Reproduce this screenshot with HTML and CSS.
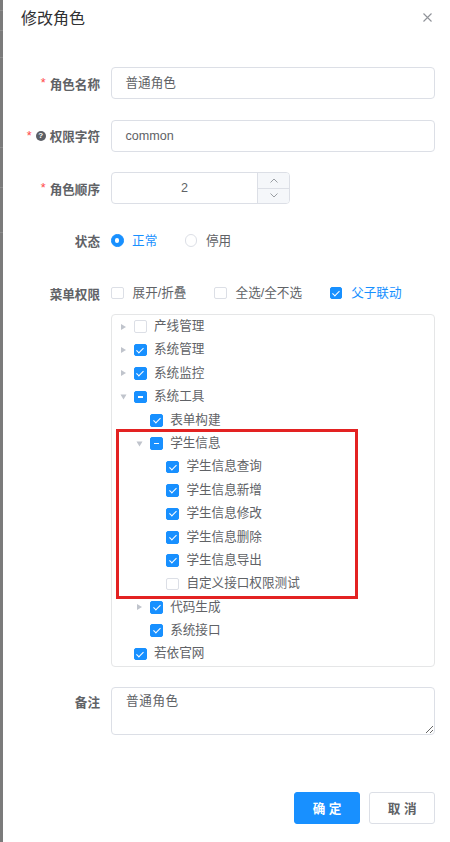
FILE: index.html
```html
<!DOCTYPE html>
<html lang="zh-CN">
<head>
<meta charset="utf-8">
<title>修改角色</title>
<link rel="stylesheet" href="styles.css">
</head>
<body>
<div class="page">
  <div class="backdrop"></div>
  <div class="dialog">
    <div class="dialog-header">
      <span class="dialog-title">修改角色</span>
      <span class="close">
        <svg width="9" height="9" viewBox="0 0 9 9"><path d="M0.5 0.5 L8.5 8.5 M8.5 0.5 L0.5 8.5" stroke="#909399" stroke-width="1.1" fill="none"/></svg>
      </span>
    </div>
    <div class="dialog-body">
      <div class="form-item">
        <div class="form-label"><span class="req">*</span>角色名称</div>
        <div class="form-content"><div class="input">普通角色</div></div>
      </div>
      <div class="form-item">
        <div class="form-label"><span class="req">*</span><span class="help">?</span>权限字符</div>
        <div class="form-content"><div class="input">common</div></div>
      </div>
      <div class="form-item">
        <div class="form-label"><span class="req">*</span>角色顺序</div>
        <div class="form-content">
          <div class="input-number">
            <div class="num-value">2</div>
            <div class="num-controls">
              <div class="num-btn num-up"><svg width="8" height="5" viewBox="0 0 8 5"><path d="M0.5 4.5 L4 1 L7.5 4.5" stroke="#909399" stroke-width="0.9" fill="none"/></svg></div>
              <div class="num-btn"><svg width="8" height="5" viewBox="0 0 8 5"><path d="M0.5 0.5 L4 4 L7.5 0.5" stroke="#909399" stroke-width="0.9" fill="none"/></svg></div>
            </div>
          </div>
        </div>
      </div>
      <div class="form-item">
        <div class="form-label">状态</div>
        <div class="form-content">
          <div class="radio-group">
            <div class="radio is-checked"><span class="radio-dot"></span><span class="radio-label">正常</span></div>
            <div class="radio"><span class="radio-dot"></span><span class="radio-label">停用</span></div>
          </div>
        </div>
      </div>
      <div class="form-item">
        <div class="form-label">菜单权限</div>
        <div class="form-content">
          <div class="check-group">
            <div class="check-item"><span class="cb"></span><span class="check-label">展开/折叠</span></div>
            <div class="check-item"><span class="cb"></span><span class="check-label">全选/全不选</span></div>
            <div class="check-item is-checked"><span class="cb checked"></span><span class="check-label">父子联动</span></div>
          </div>
          <div class="tree">
            <div class="node"><span class="expand"><span class="caret"></span></span><span class="cb"></span><span class="node-label">产线管理</span></div>
            <div class="node"><span class="expand"><span class="caret"></span></span><span class="cb checked"></span><span class="node-label">系统管理</span></div>
            <div class="node"><span class="expand"><span class="caret"></span></span><span class="cb checked"></span><span class="node-label">系统监控</span></div>
            <div class="node"><span class="expand"><span class="caret down"></span></span><span class="cb indeterminate"></span><span class="node-label">系统工具</span></div>
            <div class="node lvl1"><span class="expand"></span><span class="cb checked"></span><span class="node-label">表单构建</span></div>
            <div class="node lvl1"><span class="expand"><span class="caret down"></span></span><span class="cb indeterminate"></span><span class="node-label">学生信息</span></div>
            <div class="node lvl2"><span class="expand"></span><span class="cb checked"></span><span class="node-label">学生信息查询</span></div>
            <div class="node lvl2"><span class="expand"></span><span class="cb checked"></span><span class="node-label">学生信息新增</span></div>
            <div class="node lvl2"><span class="expand"></span><span class="cb checked"></span><span class="node-label">学生信息修改</span></div>
            <div class="node lvl2"><span class="expand"></span><span class="cb checked"></span><span class="node-label">学生信息删除</span></div>
            <div class="node lvl2"><span class="expand"></span><span class="cb checked"></span><span class="node-label">学生信息导出</span></div>
            <div class="node lvl2"><span class="expand"></span><span class="cb"></span><span class="node-label">自定义接口权限测试</span></div>
            <div class="node lvl1"><span class="expand"><span class="caret"></span></span><span class="cb checked"></span><span class="node-label">代码生成</span></div>
            <div class="node lvl1"><span class="expand"></span><span class="cb checked"></span><span class="node-label">系统接口</span></div>
            <div class="node"><span class="expand"></span><span class="cb checked"></span><span class="node-label">若依官网</span></div>
            <div class="highlight"></div>
          </div>
        </div>
      </div>
      <div class="form-item">
        <div class="form-label label-top">备注</div>
        <div class="form-content"><textarea class="textarea" readonly>普通角色</textarea></div>
      </div>
    </div>
    <div class="dialog-footer">
      <button class="btn btn-primary">确 定</button>
      <button class="btn">取 消</button>
    </div>
  </div>
</div>
</body>
</html>
```
FILE: styles.css
```css
html, body {
  margin: 0;
  padding: 0;
  height: 100%;
}

body {
  font-family: "Liberation Sans", "Noto Sans CJK SC", sans-serif;
  font-size: 12.6px;
  color: #606266;
  background: #fff;
}

.page {
  display: flex;
  height: 842px;
  overflow: hidden;
}

.backdrop {
  width: 3px;
  flex: none;
  background: linear-gradient(to bottom,
    #7b7b7b 0 10px, #8c8c8c 10px 11px,
    #7b7b7b 11px 30px, #8c8c8c 30px 31px,
    #7b7b7b 31px 57px, #8c8c8c 57px 58px,
    #7b7b7b 58px 147px, #8c8c8c 147px 148px,
    #7b7b7b 148px 187px, #8c8c8c 187px 188px,
    #7b7b7b 188px 232px, #8c8c8c 232px 233px,
    #7b7b7b 233px 100%);
}

.dialog {
  flex: 1;
  min-width: 0;
  background: #fff;
  padding: 0 15px 0 18px;
  display: flex;
  flex-direction: column;
}

.dialog-header {
  display: flex;
  align-items: flex-start;
  height: 38px;
  padding-top: 8px;
  box-sizing: border-box;
}

.dialog-title {
  font-size: 16px;
  line-height: 22px;
  color: #303133;
}

.close {
  margin-left: auto;
  margin-right: 3px;
  margin-top: 4.5px;
  width: 9px;
  height: 9px;
  display: flex;
}

.dialog-body {
  padding-top: 29px;
}

.form-item {
  display: flex;
  margin-bottom: 20.5px;
}

.form-label {
  width: 90px;
  height: 32px;
  flex: none;
  box-sizing: border-box;
  padding-right: 11px;
  display: flex;
  justify-content: flex-end;
  align-items: center;
  font-weight: 700;
  color: #606266;
  white-space: nowrap;
}

.label-top {
  height: 28px;
}

.req {
  color: #ff4949;
  margin-right: 4px;
  font-weight: 400;
}

.help {
  display: inline-flex;
  justify-content: center;
  align-items: center;
  width: 10px;
  height: 10px;
  border-radius: 50%;
  background: #5c5f66;
  color: #fff;
  font-size: 8px;
  font-weight: 700;
  line-height: 10px;
  margin-right: 4px;
}

.form-content {
  flex: 1;
  min-width: 0;
  line-height: 32px;
}

.input {
  height: 32px;
  box-sizing: border-box;
  border: 1px solid #dcdfe6;
  border-radius: 4px;
  padding: 0 13.5px;
  line-height: 30px;
  color: #606266;
}

.input-number {
  display: flex;
  width: 179px;
  height: 32px;
  box-sizing: border-box;
  border: 1px solid #dcdfe6;
  border-radius: 4px;
  overflow: hidden;
}

.num-value {
  flex: 1;
  text-align: center;
  line-height: 30px;
  color: #606266;
}

.num-controls {
  width: 31px;
  flex: none;
  display: flex;
  flex-direction: column;
  background: #f5f7fa;
  border-left: 1px solid #dcdfe6;
}

.num-btn {
  flex: 1;
  display: flex;
  justify-content: center;
  align-items: center;
}

.num-up {
  border-bottom: 1px solid #dcdfe6;
}

.radio-group {
  display: flex;
  align-items: center;
  height: 32px;
}

.radio {
  display: flex;
  align-items: center;
  margin-right: 27.5px;
}

.radio-dot {
  width: 12.6px;
  height: 12.6px;
  box-sizing: border-box;
  border: 1px solid #dcdfe6;
  border-radius: 50%;
  background: #fff;
  display: flex;
  justify-content: center;
  align-items: center;
}

.radio.is-checked .radio-dot {
  background: #1890ff;
  border-color: #1890ff;
}

.radio.is-checked .radio-dot::after {
  content: "";
  width: 4.2px;
  height: 4.2px;
  border-radius: 50%;
  background: #fff;
}

.radio-label {
  padding-left: 8.5px;
  color: #606266;
}

.radio.is-checked .radio-label {
  color: #1890ff;
}

.check-group {
  display: flex;
  align-items: center;
  height: 32px;
}

.check-item {
  display: flex;
  align-items: center;
  margin-right: 27.5px;
}

.check-label {
  padding-left: 9px;
  color: #606266;
}

.check-item.is-checked .check-label {
  color: #1890ff;
}

.cb {
  width: 12.6px;
  height: 12.6px;
  box-sizing: border-box;
  border: 1px solid #dcdfe6;
  border-radius: 2px;
  background: #fff;
  position: relative;
  flex: none;
}

.cb.checked,
.cb.indeterminate {
  background: #1890ff;
  border-color: #1890ff;
}

.cb.checked::after {
  content: "";
  position: absolute;
  left: 3.4px;
  top: 0.8px;
  width: 2.7px;
  height: 6px;
  border: 1px solid #fff;
  border-left: 0;
  border-top: 0;
  transform: rotate(45deg);
}

.cb.indeterminate::after {
  content: "";
  position: absolute;
  left: 2.5px;
  right: 2.5px;
  top: 4.6px;
  height: 1.4px;
  background: #fff;
}

.tree {
  position: relative;
  margin-top: 5px;
  border: 1px solid #e5e6e7;
  border-radius: 4px;
  background: #fff;
}

.node {
  display: flex;
  align-items: center;
  height: 23.4px;
  line-height: 23.4px;
}

.lvl1 {
  padding-left: 16.2px;
}

.lvl2 {
  padding-left: 32.4px;
}

.expand {
  width: 22px;
  height: 100%;
  flex: none;
  display: flex;
  justify-content: center;
  align-items: center;
}

.caret {
  width: 0;
  height: 0;
  border-left: 5px solid #c0c4cc;
  border-top: 3.5px solid transparent;
  border-bottom: 3.5px solid transparent;
}

.caret.down {
  transform: rotate(90deg);
}

.node .cb {
  margin-right: 7.4px;
}

.node-label {
  color: #606266;
  white-space: nowrap;
}

.highlight {
  position: absolute;
  left: 4px;
  top: 114px;
  width: 242px;
  height: 170px;
  box-sizing: border-box;
  border: 3px solid #e32222;
  pointer-events: none;
}

.textarea {
  display: block;
  width: 100%;
  height: 48px;
  box-sizing: border-box;
  border: 1px solid #dcdfe6;
  border-radius: 4px;
  padding: 4px 14px;
  font-family: "Liberation Sans", "Noto Sans CJK SC", sans-serif;
  font-size: 12.6px;
  line-height: 19px;
  letter-spacing: 0.6px;
  color: #606266;
  resize: vertical;
  outline: none;
}

.dialog-footer {
  display: flex;
  justify-content: flex-end;
  gap: 9.5px;
  padding-top: 36px;
}

.btn {
  height: 32px;
  padding: 0 17.5px;
  box-sizing: border-box;
  border: 1px solid #dcdfe6;
  border-radius: 3px;
  background: #fff;
  color: #606266;
  font-family: "Liberation Sans", "Noto Sans CJK SC", sans-serif;
  font-size: 12.6px;
  font-weight: 700;
  cursor: pointer;
}

.btn-primary {
  background: #1890ff;
  border-color: #1890ff;
  color: #fff;
}
```
